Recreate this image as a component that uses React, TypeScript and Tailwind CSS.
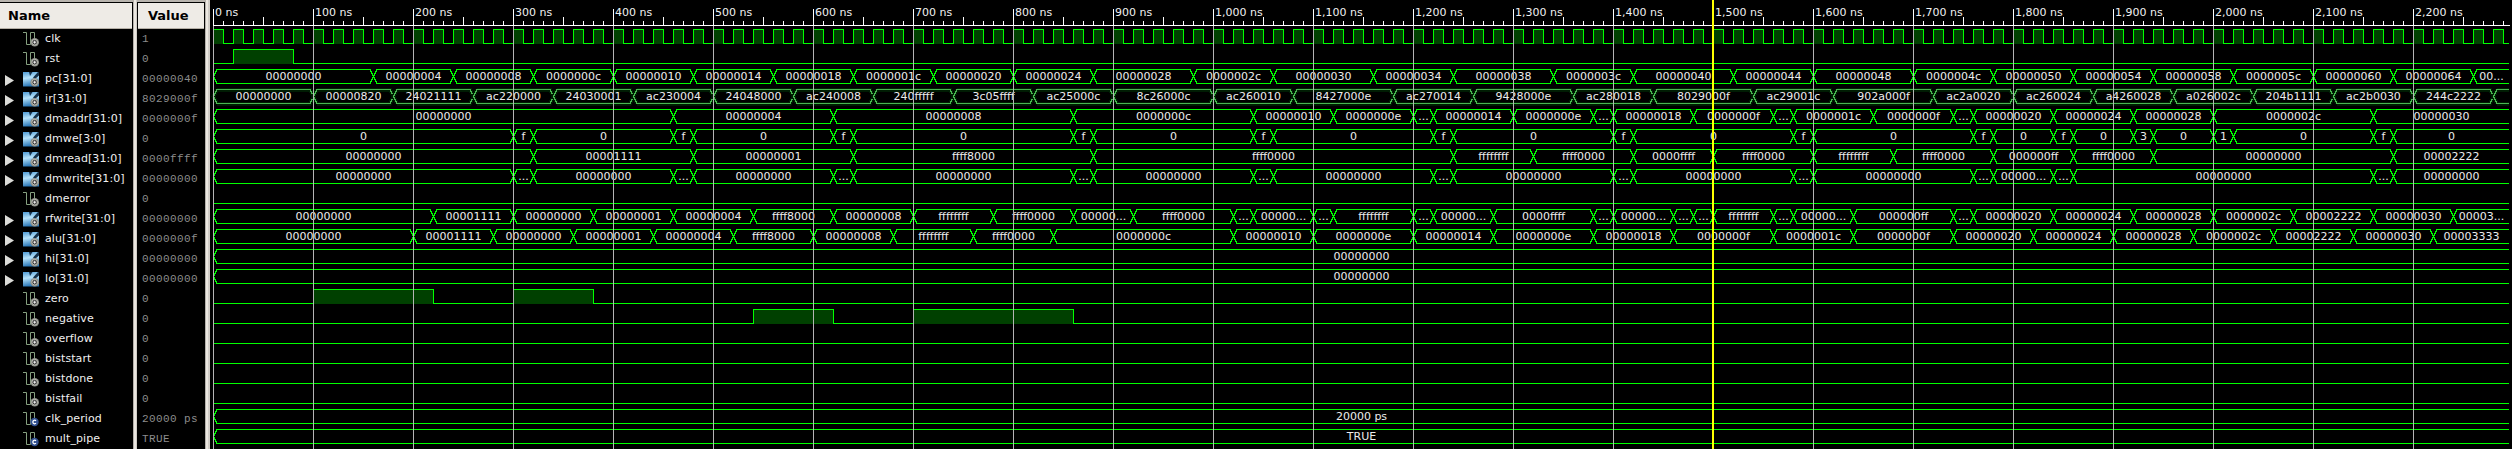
const E = 2296;
type Row = { n: string; v: string; k: "bit" | "bus" | "const"; d?: [number, string][]; hi?: [number, number][]; dim?: boolean };
const h = (s: string) => s.padStart(8, "0");
// "end:value" pairs in ns; "." is an elided label, "=" keeps the label unpadded.
const parse = (s: string): [number, string][] =>
  s.split(" ").map((p) => {
    const [e, v] = p.split(":");
    return [e === "E" ? E : +e, v === "." ? "..." : v === "" ? "" : v.startsWith("=") ? v.slice(1) : h(v)];
  });
const clk: [number, number][] = Array.from({ length: 115 }, (_, i) => [i * 20, i * 20 + 10]);
const rows: Row[] = [
  { n: "clk", v: "1", k: "bit", hi: clk },
  { n: "rst", v: "0", k: "bit", hi: [[20, 80]] },
  { n: "pc[31:0]", v: "00000040", k: "bus", d: parse("160:0 240:4 320:8 400:c 480:10 560:14 640:18 720:1c 800:20 880:24 980:28 1060:2c 1160:30 1240:34 1340:38 1420:3c 1520:40 1600:44 1700:48 1780:4c 1860:50 1940:54 2020:58 2100:5c 2180:60 2260:64 E:=00...") },
  { n: "ir[31:0]", v: "8029000f", k: "bus", dim: true, d: parse("100:0 180:820 260:24021111 340:ac220000 420:24030001 500:ac230004 580:24048000 660:ac240008 740:240fffff 820:3c05ffff 900:ac25000c 1000:8c26000c 1080:ac260010 1180:8427000e 1260:ac270014 1360:9428000e 1440:ac280018 1540:8029000f 1620:ac29001c 1720:902a000f 1800:ac2a0020 1880:ac260024 1960:a4260028 2040:a026002c 2120:204b1111 2200:ac2b0030 2280:244c2222 E:") },
  { n: "dmaddr[31:0]", v: "0000000f", k: "bus", d: parse("460:0 620:4 860:8 1040:c 1120:10 1200:e 1220:. 1300:14 1380:e 1400:. 1480:18 1560:f 1580:. 1660:1c 1740:f 1760:. 1840:20 1920:24 2000:28 2160:2c E:30") },
  { n: "dmwe[3:0]", v: "0", k: "bus", d: parse("300:=0 320:=f 460:=0 480:=f 620:=0 640:=f 860:=0 880:=f 1040:=0 1060:=f 1220:=0 1240:=f 1400:=0 1420:=f 1580:=0 1600:=f 1760:=0 1780:=f 1840:=0 1860:=f 1920:=0 1940:=3 2000:=0 2020:=1 2160:=0 2180:=f E:=0") },
  { n: "dmread[31:0]", v: "0000ffff", k: "bus", d: parse("320:0 480:1111 640:1 880:ffff8000 1240:ffff0000 1320:ffffffff 1420:ffff0000 1500:ffff 1600:ffff0000 1680:ffffffff 1780:ffff0000 1860:ff 1940:ffff0000 2180:0 E:2222") },
  { n: "dmwrite[31:0]", v: "00000000", k: "bus", d: parse("300:0 320:. 460:0 480:. 620:0 640:. 860:0 880:. 1040:0 1060:. 1220:0 1240:. 1400:0 1420:. 1580:0 1600:. 1760:0 1780:. 1840:=00000... 1860:. 2160:0 2180:. E:0") },
  { n: "dmerror", v: "0", k: "bit" },
  { n: "rfwrite[31:0]", v: "00000000", k: "bus", d: parse("220:0 300:1111 380:0 460:1 540:4 620:ffff8000 700:8 780:ffffffff 860:ffff0000 920:=00000... 1020:ffff0000 1040:. 1100:=00000... 1120:. 1200:ffffffff 1220:. 1280:=00000... 1380:ffff 1400:. 1460:=00000... 1480:. 1500:. 1560:ffffffff 1580:. 1640:=00000... 1740:ff 1760:. 1840:20 1920:24 2000:28 2080:2c 2160:2222 2240:30 E:=00003...") },
  { n: "alu[31:0]", v: "0000000f", k: "bus", d: parse("200:0 280:1111 360:0 440:1 520:4 600:ffff8000 680:8 760:ffffffff 840:ffff0000 1020:c 1100:10 1200:e 1280:14 1380:e 1460:18 1560:f 1640:1c 1740:f 1820:20 1900:24 1980:28 2060:2c 2140:2222 2220:30 E:3333") },
  { n: "hi[31:0]", v: "00000000", k: "bus", d: [[E, h("0")]] },
  { n: "lo[31:0]", v: "00000000", k: "bus", d: [[E, h("0")]] },
  { n: "zero", v: "0", k: "bit", hi: [[100, 220], [300, 380]] },
  { n: "negative", v: "0", k: "bit", hi: [[540, 620], [700, 860]] },
  { n: "overflow", v: "0", k: "bit" },
  { n: "biststart", v: "0", k: "bit" },
  { n: "bistdone", v: "0", k: "bit" },
  { n: "bistfail", v: "0", k: "bit" },
  { n: "clk_period", v: "20000 ps", k: "const", d: [[E, "20000 ps"]] },
  { n: "mult_pipe", v: "TRUE", k: "const", d: [[E, "TRUE"]] },
];

function SignalIcon({ kind }: { kind: Row["k"] }) {
  return (
    <svg width="16" height="16" viewBox="0 0 16 16" className="shrink-0">
      {kind === "bus" ? (
        <>
          <defs>
            <linearGradient id="sky" x1="0" y1="0" x2="0.2" y2="1">
              <stop offset="0" stopColor="#4d9ad4" />
              <stop offset="0.45" stopColor="#b5e2fa" />
              <stop offset="1" stopColor="#2b78b8" />
            </linearGradient>
          </defs>
          <rect y="1" width="16" height="14.5" fill="url(#sky)" />
          <path d="M6 1h3.5L7 5zM10 6.5L15 1h1v3.5l-4 3.500z" fill="#14304a" />
        </>
      ) : (
        <path d="M0 1.5h3.5v12h4v-12h4v7" fill="none" stroke="#86a080" strokeWidth="1" />
      )}
      {kind === "const" ? (
        <>
          <circle cx="11.5" cy="11" r="4.2" fill="#32508f" />
          <path d="M13 9.8a1.8 1.8 0 1 0 0 2.4" fill="none" stroke="#fff" strokeWidth="1.2" />
        </>
      ) : (
        <>
          <circle cx="11.7" cy="11.2" r="4.3" fill="#8d8f88" />
          <circle cx="11.7" cy="11.2" r="2.8" fill="#333" stroke="#c8c8c0" strokeWidth="0.9" />
          <path d="M11.7 9.7v3M10.2 11.2h3" stroke="#fff" strokeWidth="0.9" />
        </>
      )}
    </svg>
  );
}

function BitWave({ hi = [] }: { hi?: [number, number][] }) {
  let d = "M0 17.5";
  hi.forEach(([a, b]) => {
    d += `H${a + 0.5}V3.5H${b + 0.5}V17.5`;
  });
  d += `H${E}`;
  return (
    <>
      {hi.map(([a, b]) => (
        <rect key={a} x={a} y="3" width={b - a} height="15" fill="#004000" />
      ))}
      <path d={d} fill="none" stroke="#00ff00" />
    </>
  );
}

function BusWave({ d, dim }: { d: [number, string][]; dim?: boolean }) {
  const c = dim ? "#48b850" : "#00ff00";
  return (
    <>
      {d.map(([e, v], i) => {
        const s = i ? d[i - 1][0] : 0;
        const last = e === E;
        const a = s + 0.5;
        const b = e + 0.5;
        const right = last ? `M${a + 3.5} 3.5H${E}M${a + 3.5} 17.5H${E}` : `M${a + 3.5} 3.5H${b - 3.5}L${b} 10.5L${b - 3.5} 17.5H${a + 3.5}`;
        const p = `M${a + 3.5} 3.5L${a} 10.5L${a + 3.5} 17.5${right}`;
        return (
          <g key={i}>
            {dim && <path d={p} fill="none" stroke="#001c03" strokeWidth="4" />}
            <path d={p} fill="none" stroke={c} />
            <text x={(s + e) / 2 + 0.5} y="14" textAnchor="middle" fill="#ececec">{v}</text>
          </g>
        );
      })}
    </>
  );
}

const Divider = () => <div className="w-[4px] shrink-0 border-x border-l-[#b4b0aa] border-r-[#d0ccc6] bg-[#ebe7e1]" />;

export default function App() {
  return (
    <div className="flex h-[449px] w-[2512px] overflow-hidden bg-black font-['DejaVu_Sans',sans-serif] text-[11px] text-[#f0f0f0]">
      <div className="w-[133px] shrink-0">
        <div className="h-[29px] border-t-2 border-[#b8b4ae] pr-px">
          <div className="flex h-[27px] items-center border-b border-t border-b-[#b5afa6] border-t-black bg-[#eeebe6] pl-[8px] pt-px text-[13px] font-bold text-black">Name</div>
        </div>
        {rows.map((r) => (
          <div key={r.n} className="flex h-5 items-center">
            <div className="flex w-[23px] shrink-0 pl-[5px] pt-[3px]">
              {r.k === "bus" && (
                <svg width="9" height="11" viewBox="0 0 9 11"><path d="M0 0L9 5.5L0 11Z" fill="#dcdcd8" /></svg>
              )}
            </div>
            <SignalIcon kind={r.k} />
            <span className="whitespace-pre pl-[6px] tracking-[0.08px]">{r.n}</span>
          </div>
        ))}
      </div>
      <Divider />
      <div className="w-[68px] shrink-0">
        <div className="h-[29px] border-t-2 border-[#b8b4ae] px-px">
          <div className="flex h-[27px] items-center border-b border-t border-b-[#b5afa6] border-t-black bg-[#eeebe6] pl-[10px] pt-px text-[13px] font-bold text-black">Value</div>
        </div>
        {rows.map((r) => (
          <div key={r.n} className="flex h-5 items-center whitespace-pre pl-[5px] font-['Liberation_Mono',monospace] tracking-[0.4px] text-[#8c8c8c]">{r.v}</div>
        ))}
      </div>
      <Divider />
      <div className="w-px shrink-0 bg-[#d0ccc6]" />
      <svg width="2302" height="449" viewBox="-3 0 2302 449" className="shrink-0" shapeRendering="crispEdges">
        {rows.map((r, i) => (
          <g key={r.n} transform={`translate(0 ${26 + i * 20})`}>
            {r.k === "bit" ? <BitWave hi={r.hi} /> : <BusWave d={r.d!} dim={r.dim} />}
          </g>
        ))}
        {Array.from({ length: 23 }, (_, i) => (
          <g key={i}>
            <rect x={i * 100} y="25" width="1" height="424" fill="#b4b4b4" />
            <rect x={i * 100} y="9" width="1" height="16" fill="#fff" />
            <text x={i * 100 + 2} y="16" fill="#f0f0f0">{`${(i * 100).toLocaleString("en-US")} ns`}</text>
          </g>
        ))}
        {Array.from({ length: 230 }, (_, i) => i % 10 ? <rect key={i} x={i * 10} y={i % 5 ? 21 : 17} width="1" height={i % 5 ? 4 : 8} fill="#fff" /> : null)}
        <rect x="0" y="25" width="2297" height="1" fill="#fff" />
        <rect x="1499" y="0" width="2" height="449" fill="#ffff00" />
      </svg>
    </div>
  );
}
